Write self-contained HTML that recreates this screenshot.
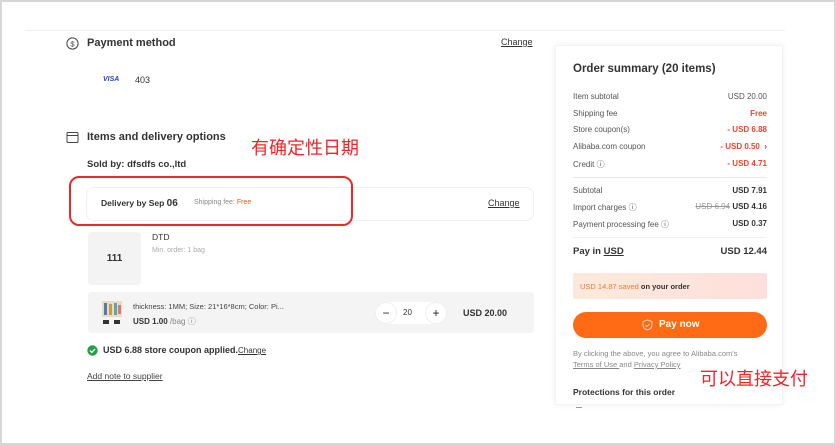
<!DOCTYPE html>
<html><head><meta charset="utf-8"><style>
*{margin:0;padding:0;box-sizing:border-box}
html,body{width:836px;height:446px;overflow:hidden;background:#fff}
body{font-family:"Liberation Sans","Noto Sans CJK SC",sans-serif;color:#222;position:relative}
.frame{position:absolute;left:0;top:0;width:836px;height:446px;border:2px solid #d6d6d6;border-bottom-width:3px}
.a{position:absolute;white-space:nowrap}
.b{font-weight:bold}
.u{text-decoration:underline}
.g{color:#999}
.r{color:#f0442a}
.row{position:absolute;left:573px;width:194px;font-size:8px;color:#555;display:flex;justify-content:space-between}
.row b{color:#333}
.cn{font-family:"Noto Sans CJK SC",sans-serif;color:#f0242a;font-size:18px}
</style></head><body>
<div class="frame"></div>
<div class="a" style="left:25px;top:30px;width:760px;height:1px;background:#f0f0f0"></div>

<svg class="a" style="left:66px;top:37px" width="13" height="13" viewBox="0 0 13 13"><circle cx="6.5" cy="6.5" r="5.6" fill="none" stroke="#444" stroke-width="1"/><text x="6.5" y="9.3" font-size="7.5" text-anchor="middle" fill="#444" font-family="Liberation Sans">$</text></svg>
<div class="a b" style="left:87px;top:37px;font-size:11px;color:#333">Payment method</div>
<div class="a u" style="left:501px;top:37px;font-size:9px;color:#333">Change</div>
<div class="a b" style="left:103px;top:76px;font-size:7px;color:#2b3ec2;font-style:italic">VISA</div>
<div class="a" style="left:135px;top:75px;font-size:9px;color:#333">403</div>

<svg class="a" style="left:66px;top:131px" width="13" height="13" viewBox="0 0 13 13"><rect x="1" y="1.5" width="11" height="10" rx="1.2" fill="none" stroke="#444" stroke-width="1"/><line x1="1" y1="4.5" x2="12" y2="4.5" stroke="#444"/></svg>
<div class="a b" style="left:87px;top:131px;font-size:11px;color:#333">Items and delivery options</div>
<div class="a cn" style="left:251px;top:134px">有确定性日期</div>
<div class="a b" style="left:87px;top:159px;font-size:9.5px;color:#333">Sold by: dfsdfs co.,ltd</div>

<div class="a" style="left:86px;top:187px;width:448px;height:34px;border:1px solid #f0f0f0;border-radius:8px"></div>
<div class="a b" style="left:101px;top:198px;font-size:8.5px;color:#333">Delivery by Sep <span style="font-size:10px">06</span></div>
<div class="a" style="left:194px;top:199px;font-size:7px;color:#888">Shipping fee: <span style="color:#e5581e">Free</span></div>
<div class="a u" style="left:488px;top:198px;font-size:9px;color:#333">Change</div>
<div class="a" style="left:69px;top:176px;width:284px;height:50px;border:2px solid #ea2a2a;border-radius:10px"></div>

<div class="a" style="left:88px;top:232px;width:53px;height:53px;background:#f3f3f3;border-radius:4px;font-size:10px;font-weight:bold;color:#333;text-align:center;line-height:53px">111</div>
<div class="a" style="left:152px;top:232px;font-size:8.5px;color:#333">DTD</div>
<div class="a g" style="left:152px;top:247px;font-size:7px;color:#aaa">Min. order: 1 bag</div>

<div class="a" style="left:88px;top:292px;width:446px;height:41px;background:#f4f4f4;border-radius:4px"></div>
<svg class="a" style="left:101px;top:300px" width="22" height="26" viewBox="0 0 22 26"><rect x="1" y="1" width="20" height="16" fill="#e8dcc8"/><rect x="3" y="3" width="3" height="12" fill="#4a7fb5"/><rect x="8" y="4" width="3" height="11" fill="#c94"/><rect x="13" y="3" width="3" height="12" fill="#5aa"/><rect x="17" y="5" width="3" height="9" fill="#d77"/><rect x="2" y="20" width="6" height="4" fill="#333"/><rect x="13" y="20" width="6" height="4" fill="#333"/></svg>
<div class="a" style="left:133px;top:302px;font-size:7.5px;color:#444">thickness: 1MM; Size: 21*16*8cm; Color: Pi...</div>
<div class="a" style="left:133px;top:316px;font-size:8px;color:#333"><b>USD 1.00</b> <span style="color:#888">/bag ⓘ</span></div>
<div class="a" style="left:375px;top:302px;width:72px;height:22px;background:#fff;border-radius:11px"></div>
<div class="a" style="left:375px;top:302px;width:22px;height:22px;border-radius:11px;border:1px solid #eee;text-align:center;line-height:20px;font-size:12px">−</div>
<div class="a" style="left:425px;top:302px;width:22px;height:22px;border-radius:11px;border:1px solid #eee;text-align:center;line-height:20px;font-size:12px">+</div>
<div class="a" style="left:403px;top:308px;font-size:8px;color:#333">20</div>
<div class="a b" style="left:463px;top:308px;font-size:9px;color:#333">USD 20.00</div>

<svg class="a" style="left:87px;top:345px" width="11" height="11" viewBox="0 0 11 11"><circle cx="5.5" cy="5.5" r="5.2" fill="#23a047"/><path d="M3 5.6l1.8 1.8L8 4" fill="none" stroke="#fff" stroke-width="1.3"/></svg>
<div class="a b" style="left:103px;top:345px;font-size:9px;color:#333">USD 6.88 store coupon applied.<span class="u" style="font-weight:normal;font-size:8px">Change</span></div>
<div class="a u" style="left:87px;top:371px;font-size:8.5px;color:#444">Add note to supplier</div>

<div class="a" style="left:555px;top:45px;width:228px;height:360px;background:#fff;box-shadow:0 0 6px rgba(0,0,0,.06);border:1px solid #f3f3f3"></div>
<div class="a b" style="left:573px;top:63px;font-size:11.5px;color:#333">Order summary (20 items)</div>
<div class="row" style="top:92px"><span>Item subtotal</span><span>USD 20.00</span></div>
<div class="row" style="top:109px"><span>Shipping fee</span><span class="r b">Free</span></div>
<div class="row" style="top:125px"><span>Store coupon(s)</span><span class="r b">- USD 6.88</span></div>
<div class="row" style="top:142px"><span>Alibaba.com coupon</span><span class="r b">- USD 0.50 <span style="color:#555">&nbsp;›</span></span></div>
<div class="row" style="top:159px"><span>Credit ⓘ</span><span class="r b">- USD 4.71</span></div>
<div class="a" style="left:573px;top:177px;width:194px;height:1px;background:#e8e8e8"></div>
<div class="row" style="top:186px"><span>Subtotal</span><b>USD 7.91</b></div>
<div class="row" style="top:202px"><span>Import charges ⓘ</span><span><s style="color:#999">USD 6.94</s> <b>USD 4.16</b></span></div>
<div class="row" style="top:219px"><span>Payment processing fee ⓘ</span><b>USD 0.37</b></div>
<div class="a" style="left:573px;top:237px;width:194px;height:1px;background:#f0f0f0"></div>
<div class="row" style="top:246px;font-size:9.5px;color:#333"><b>Pay in <span class="u">USD</span></b><b>USD 12.44</b></div>
<div class="a" style="left:573px;top:273px;width:194px;height:26px;background:linear-gradient(90deg,#fde9dc,#fde0dc);border-radius:2px"></div>
<div class="a" style="left:580px;top:282px;font-size:7.5px;color:#333"><span style="color:#f07a3a">USD 14.87 saved</span> <b>on your order</b></div>
<div class="a" style="left:573px;top:312px;width:194px;height:26px;background:#ff6a14;border-radius:13px"></div>
<svg class="a" style="left:642px;top:319px" width="11" height="12" viewBox="0 0 11 12"><path d="M5.5 1L10 2.5V6c0 2.6-2 4.3-4.5 5C3 10.3 1 8.6 1 6V2.5z" fill="none" stroke="#ffd2b8" stroke-width="1"/><path d="M3.5 6l1.5 1.5L7.5 5" fill="none" stroke="#ffd2b8" stroke-width="1"/></svg>
<div class="a b" style="left:659px;top:319px;font-size:10px;color:#fff">Pay now</div>
<div class="a" style="left:573px;top:348px;font-size:7.5px;color:#888;line-height:11px">By clicking the above, you agree to Alibaba.com's<br><span class="u">Terms of Use </span>and <span class="u">Privacy Policy</span></div>
<div class="a cn" style="left:700px;top:365px">可以直接支付</div>
<div class="a b" style="left:573px;top:387px;font-size:8.5px;color:#333">Protections for this order</div>
<div class="a" style="left:576px;top:407px;width:6px;height:1px;background:#999"></div>
</body></html>
